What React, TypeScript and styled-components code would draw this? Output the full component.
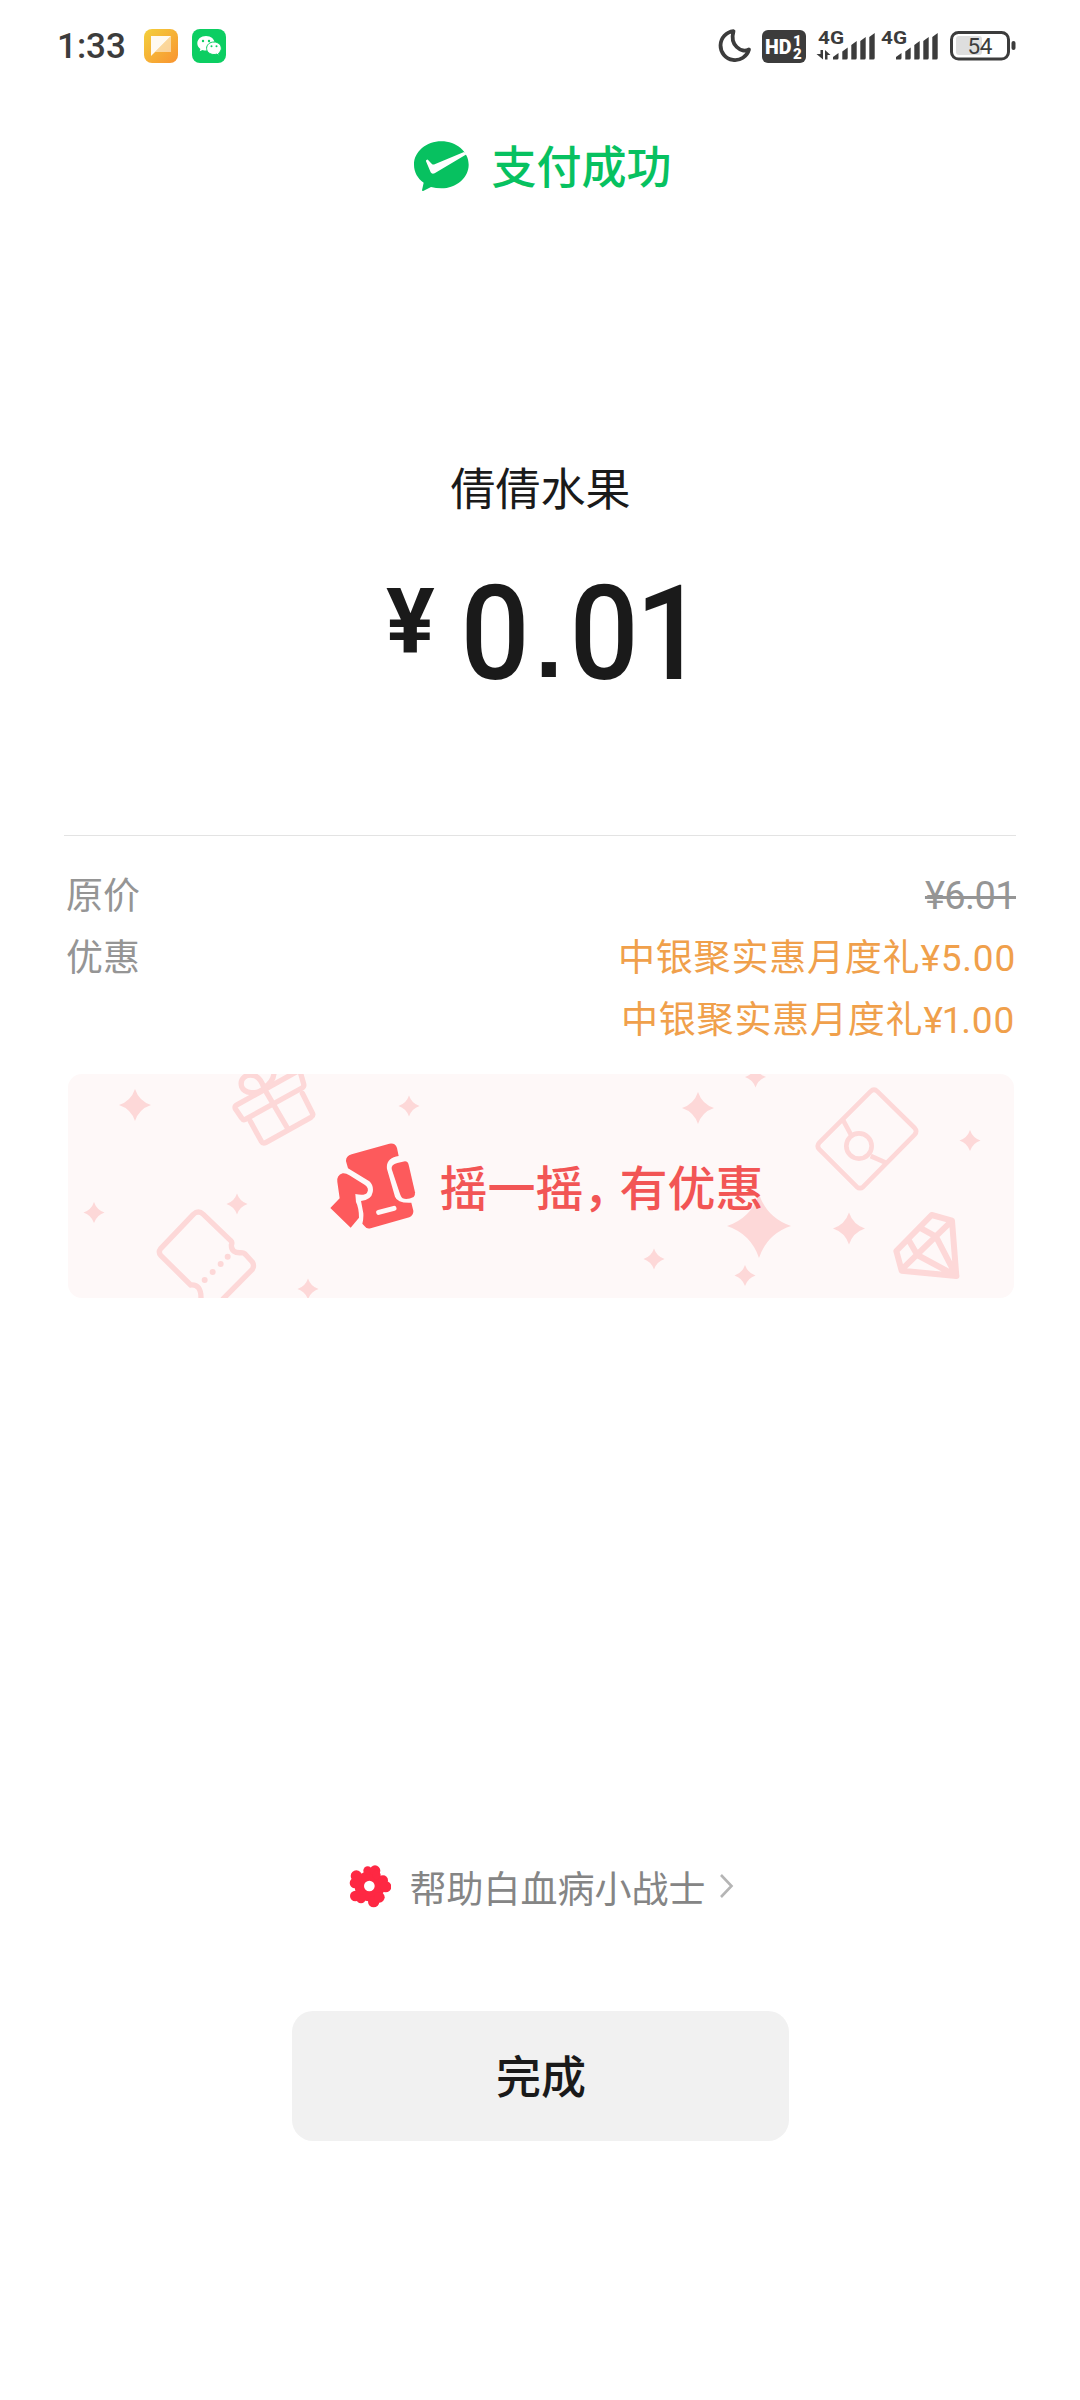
import React from "react";
import styled, { createGlobalStyle } from "styled-components";

const cjk = `Roboto, "Noto Sans CJK SC", sans-serif`;

const GlobalStyle = createGlobalStyle`
  * { box-sizing: border-box; }
  body { margin: 0; background: #fff; }
`;

const Page = styled.main`
  width: 1080px;
  height: 2400px;
  display: flex;
  flex-direction: column;
  align-items: center;
  overflow: hidden;
  background: #fff;
  color: #1a1a1a;
  font-family: ${cjk};
`;

const StatusBar = styled.header`
  width: 100%;
  height: 92px;
  padding: 0 64px 0 57px;
  display: flex;
  align-items: center;
  justify-content: space-between;
  color: #3c3c3c;
`;

const StatusGroup = styled.div<{ $gap: number }>`
  display: flex;
  align-items: center;
  gap: ${(p) => p.$gap}px;
  svg { display: block; overflow: visible; }
`;

const Clock = styled.span`
  width: 73px;
  font: 500 35px/40px Roboto, sans-serif;
  white-space: nowrap;
  padding-top: 1px;
`;

const Success = styled.div`
  height: 150px;
  padding: 49px 0 0 5px;
  display: flex;
  align-items: flex-start;
  gap: 22px;
  color: #07c160;
  svg { display: block; }
`;

const SuccessText = styled.h1`
  margin: 1px 0 0;
  font-size: 45px;
  font-weight: 500;
  line-height: 54px;
`;

const Merchant = styled.h2`
  margin: 219px 0 0;
  padding-left: 1px;
  font-size: 45px;
  font-weight: 400;
  line-height: 60px;
`;

const Amount = styled.div`
  width: 324px;
  height: 314px;
  margin-left: 16px;
  padding-top: 37px;
  display: flex;
  align-items: flex-start;
`;

const Currency = styled.span`
  flex: none;
  width: 71.5px;
  font: 700 91px/107px Roboto, sans-serif;
  margin-top: 11px;
`;

const Figure = styled.span`
  flex: none;
  display: flex;
  font: 500 131px/152px Roboto, sans-serif;
`;

const Digit = styled.span<{ $pull?: number }>`
  flex: none;
  width: 74px;
  margin-left: ${(p) => -(p.$pull ?? 0)}px;
  transform: scaleX(0.93);
`;

const Point = styled.span`
  flex: none;
  width: 35px;
  text-align: center;
  font: 700 100px/152px "Liberation Sans", sans-serif;
  padding-top: 8px;
`;

const Details = styled.section`
  width: 952px;
  border-top: 1px solid #e3e3e3;
  padding: 30px 0 22px 2px;
  display: flex;
  flex-direction: column;
`;

const DetailRow = styled.div`
  display: flex;
  justify-content: space-between;
  font-size: 37px;
  line-height: 62px;
  color: #959595;
`;

const Values = styled.div`
  display: flex;
  flex-direction: column;
  align-items: flex-end;
`;

const OldPrice = styled.s`
  text-decoration-thickness: 3px;
  font-size: 38px;
  letter-spacing: -0.6px;
  line-height: 60px;
`;

const Discount = styled.span<{ $inset?: number }>`
  color: #f0a04b;
  letter-spacing: 0.8px;
  padding-right: ${(p) => p.$inset ?? 0}px;
`;

const Narrow = styled.span`
  margin: 0 -2px 0 -2px;
`;

const Banner = styled.section`
  position: relative;
  width: 946px;
  height: 224px;
  margin-left: 2px;
  padding-left: 12px;
  border-radius: 14px;
  overflow: hidden;
  background: #fef8f8;
  display: flex;
  align-items: center;
  justify-content: center;
  gap: 23px;
`;

const Backdrop = styled.svg`
  position: absolute;
  inset: 0;
`;

const BannerIcon = styled.svg`
  position: relative;
  display: block;
`;

const BannerText = styled.strong`
  position: relative;
  padding-top: 8px;
  font-size: 48px;
  font-weight: 500;
  line-height: 60px;
  color: #f25555;
`;

const Comma = styled.span`
  letter-spacing: -12px;
`;

const Charity = styled.a`
  margin-top: 555px;
  height: 66px;
  padding-left: 2px;
  display: flex;
  align-items: center;
  color: #858585;
  font-size: 37px;
  line-height: 66px;
  svg { display: block; }
`;

const CharityText = styled.span`
  margin: 0 13px 0 19px;
  padding-top: 9px;
`;

const Done = styled.button`
  margin-top: 92px;
  margin-left: 1px;
  width: 497px;
  height: 130px;
  padding: 0 0 4px 1px;
  border: 0;
  border-radius: 21px;
  background: #f1f1f1;
  color: #1a1a1a;
  font-family: ${cjk};
  font-size: 45px;
  font-weight: 500;
`;

const NoteAppIcon = () => (
  <svg width="34" height="34" viewBox="0 0 34 34">
    <defs>
      <linearGradient id="note" x1="0" y1="0" x2="1" y2="1">
        <stop offset="0" stopColor="#f3d03c" />
        <stop offset="1" stopColor="#f99330" />
      </linearGradient>
    </defs>
    <rect width="34" height="34" rx="8" fill="url(#note)" />
    <path d="M7 7H27L7 27Z" fill="#fffaf0" />
    <path d="M27 7V23H11Z" fill="#fff" opacity=".5" />
  </svg>
);

const ChatAppIcon = () => (
  <svg width="34" height="34" viewBox="0 0 34 34">
    <rect width="34" height="34" rx="8" fill="#0cce62" />
    <path d="M14 7C9 7 5.300 10.200 5.300 14.300C5.300 16.600 6.500 18.500 8.400 19.900L7.700 22.300L10.500 20.900Q12.200 21.500 14 21.500C19 21.500 22.700 18.300 22.700 14.300C22.700 10.200 19 7 14 7Z" fill="#fff" />
    <path d="M22 13C17.800 13 14.600 15.700 14.600 19.300S17.800 25.500 22 25.500Q23.500 25.500 24.800 25.100L27.200 26.400L26.600 24.200C28.200 23 29.300 21.300 29.300 19.300C29.300 15.700 26.200 13 22 13Z" fill="#fff" stroke="#0cce62" strokeWidth="1" />
    <g fill="#0cce62">
      <circle cx="11" cy="12" r="1.200" /><circle cx="17" cy="12" r="1.200" />
      <circle cx="19.500" cy="17.300" r="1" /><circle cx="24.500" cy="17.300" r="1" />
    </g>
  </svg>
);

const MoonIcon = () => (
  <svg width="33" height="34" viewBox="0 0 33 34">
    <path d="M15.500 2.200A14.500 14.500 0 1 0 31 20.500C23 24.500 11.500 16 15.500 2.200Z" fill="none" stroke="#3c3c3c" strokeWidth="3.800" strokeLinejoin="round" />
  </svg>
);

const HdIcon = () => (
  <svg width="44" height="33" viewBox="0 0 44 33">
    <rect width="44" height="33" rx="6" fill="#3c3c3c" />
    <g fill="#fff" fontFamily="Roboto, sans-serif" fontWeight="900">
      <text x="3" y="23.500" fontSize="19.500" textLength="26.500" lengthAdjust="spacingAndGlyphs">HD</text>
      <text x="31" y="15.500" fontSize="15">1</text>
      <text x="31" y="29" fontSize="15">2</text>
    </g>
  </svg>
);

const SignalIcon = ({ data }: { data?: boolean }) => (
  <svg width="57" height="34" viewBox="0 0 57 34" fill="#3c3c3c">
    <text x="0" y="14.500" fontFamily="Roboto, sans-serif" fontWeight="700" fontSize="19" textLength="26" lengthAdjust="spacingAndGlyphs">4G</text>
    <path d="M15 30.500V28L20.500 24V29Q20.500 30.500 19 30.500ZM24.300 30.500V22.500L29.700 18.500V29Q29.700 30.500 28.200 30.500ZM33.300 30.500V16L38.700 12V29Q38.700 30.500 37.200 30.500ZM42.300 30.500V12L47.700 8V29Q47.700 30.500 46.200 30.500ZM51.300 30.500V8L56.700 4V29Q56.700 30.500 55.200 30.500Z" />
    {data && <path d="M-1.500 25H2.500V21H5V30.500ZM7 21L12.500 26H9.500V30.500H7Z" />}
  </svg>
);

const BatteryIcon = () => (
  <svg width="66" height="30" viewBox="0 0 66 30">
    <rect x="6" y="5" width="26" height="19" rx="3" fill="#dedede" />
    <rect x="1.500" y="1.500" width="57" height="26.500" rx="7" fill="none" stroke="#3c3c3c" strokeWidth="3" />
    <rect x="61.500" y="10" width="4" height="9" rx="2" fill="#3c3c3c" />
    <text x="17.500" y="23" fontFamily="Roboto, sans-serif" fontWeight="400" fontSize="22.500" textLength="25" fill="#3c3c3c">54</text>
  </svg>
);

const StatusItem = styled.span<{ $before?: number }>`
  margin-left: ${(p) => p.$before ?? 0}px;
`;

const PaidIcon = () => (
  <svg width="56" height="51" viewBox="72 61 168 153">
    <path d="M157 62C112 62 75 93 75 132C75 154 86 173 104 186L99 209Q100 213 104 210L126 199Q141 203 157 203C202 203 239 171 239 132C239 93 202 62 157 62Z" fill="#07c160" />
    <path d="M114 117Q110 118 111 122L125 155Q129 162 137 158L234 100L225 94L137 131Q132 133 128 129L118 119Q116 116 114 117Z" fill="#fff" />
  </svg>
);

const ShakeIcon = () => (
  <BannerIcon width="86" height="86" viewBox="30 67 258 258">
    <g fill="#fd5a5c">
      <path d="M95 101L208 69Q226 66 231 82L236 106C212 110 198 122 201 145L225 228Q232 248 274 246L280 270Q281 284 268 290L152 323Q140 326 134 317L127 309Q131 295 130 278L123 241Q154 238 158 215Q162 195 148 182L84 143L78 122Q77 107 95 101Z" />
      <path d="M52 184Q49 164 68 158Q78 157 88 164L135 193Q149 204 141 216Q134 226 106 220L108 244Q117 262 117 291L92 321L31 262L59 233Z" />
      <path d="M232 127L255 122Q263 122 266 132L285 215Q286 224 281 229Q262 238 248 233Q243 229 240 220L215 145Q213 132 232 127Z" />
    </g>
    <path d="M176 275L222 263" stroke="#fff8f8" strokeWidth="15" strokeLinecap="round" />
  </BannerIcon>
);

const stars: [number, number, number][] = [
  [135, 1105, 16], [94, 1212.5, 10.5], [237, 1204, 10.5], [308, 1289, 10.5], [409, 1106, 10.5],
  [698, 1108, 16], [755.5, 1077, 10.5], [970, 1140.5, 10.5], [759, 1226, 32], [849, 1228.5, 16],
  [654, 1259, 10.5], [745, 1275.5, 10.5],
];

const starPath = (x: number, y: number, r: number) => {
  const k = r * 0.25;
  return `M${x} ${y - r}Q${x + k} ${y - k} ${x + r} ${y}Q${x + k} ${y + k} ${x} ${y + r}Q${x - k} ${y + k} ${x - r} ${y}Q${x - k} ${y - k} ${x} ${y - r}Z`;
};

const BannerArt = () => (
  <Backdrop width="946" height="224" viewBox="68 1074 946 224">
    {stars.map(([x, y, r]) => (
      <path key={`${x}-${y}`} d={starPath(x, y, r)} fill="#fdd8d8" />
    ))}
    <g transform="translate(60 1060) scale(.33333)" fill="none" stroke="#fdd8d8" strokeWidth="16" strokeLinejoin="round" strokeLinecap="round">
      <path d="M532 134L712 34Q718 32 722 40L731 72Q733 80 726 84L556 178Q549 181 545 174L526 146Q523 139 532 134Z" />
      <path d="M571 184L604 244Q609 252 617 248L753 172Q761 167 757 159L727 100M614 88L682 204" />
      <path d="M612 84C590 108 552 98 545 80C538 54 560 40 584 47C600 53 606 66 612 84ZM612 84Q640 65 642 40" />
      <path d="M392 675L302 586Q294 576 302 566L400 463Q415 449 430 463L512 542Q518 547 514 555Q514 580 543 578Q552 578 558 585L577 606Q584 617 577 628L490 716M392 675Q424 672 423 716" />
      <path d="M503 590L503 590.100M482 612V612.100M458 636V636.100M434 660V660.100" strokeWidth="18" />
    </g>
    <g transform="translate(630 1060) scale(.33333)" fill="none" stroke="#fdd8d8" strokeWidth="14" strokeLinejoin="round">
      <path d="M722 94Q732 84 742 94L854 204Q863 214 854 224L700 380Q690 389 680 380L568 268Q558 258 568 248Z" />
      <circle cx="687" cy="258" r="38" />
      <path d="M638 178L664 226M722 288L772 310" />
      <path d="M905 465L966 482L979 648L815 632L799 573ZM818 626L966 482M868 502L918 530L979 648L862 585L836 540" strokeWidth="18" />
    </g>
  </Backdrop>
);

const FlowerIcon = () => (
  <svg width="42" height="43" viewBox="56 76 126 129">
    <g fill="#fe2843">
      <circle cx="118" cy="140" r="45" />
      <circle cx="112" cy="93" r="13" /><circle cx="134" cy="93" r="16" /><circle cx="138" cy="106" r="13" />
      <circle cx="158" cy="122" r="15" /><circle cx="166" cy="141" r="17" />
      <circle cx="130" cy="186" r="17" /><circle cx="147" cy="173" r="16" />
      <circle cx="92" cy="177" r="14" /><circle cx="75" cy="169" r="16" />
      <circle cx="78" cy="109" r="17" /><circle cx="74" cy="130" r="16" />
    </g>
    <circle cx="117" cy="139" r="16" fill="#fff" />
  </svg>
);

const ChevronIcon = () => (
  <svg width="15" height="26" viewBox="0 0 15 26">
    <path d="M2 2L12.500 13L2 24" fill="none" stroke="#b5b5b5" strokeWidth="2.600" />
  </svg>
);

export default function App() {
  return (
    <Page>
      <GlobalStyle />
      <StatusBar>
        <StatusGroup $gap={14}>
          <Clock>1:33</Clock>
          <NoteAppIcon />
          <ChatAppIcon />
        </StatusGroup>
        <StatusGroup $gap={0}>
          <StatusItem><MoonIcon /></StatusItem>
          <StatusItem $before={11}><HdIcon /></StatusItem>
          <StatusItem $before={12}><SignalIcon data /></StatusItem>
          <StatusItem $before={6}><SignalIcon /></StatusItem>
          <StatusItem $before={12.5}><BatteryIcon /></StatusItem>
        </StatusGroup>
      </StatusBar>
      <Success>
        <PaidIcon />
        <SuccessText>支付成功</SuccessText>
      </Success>
      <Merchant>倩倩水果</Merchant>
      <Amount>
        <Currency>¥</Currency>
        <Figure>
          <Digit>0</Digit>
          <Point>.</Point>
          <Digit>0</Digit>
          <Digit $pull={8}>1</Digit>
        </Figure>
      </Amount>
      <Details>
        <DetailRow>
          <span>原价</span>
          <OldPrice>¥6.01</OldPrice>
        </DetailRow>
        <DetailRow>
          <span>优惠</span>
          <Values>
            <Discount>中银聚实惠月度礼¥5.00</Discount>
            <Discount $inset={1}>中银聚实惠月度礼¥<Narrow>1</Narrow>.00</Discount>
          </Values>
        </DetailRow>
      </Details>
      <Banner>
        <BannerArt />
        <ShakeIcon />
        <BannerText>摇一摇<Comma>，</Comma>有优惠</BannerText>
      </Banner>
      <Charity>
        <FlowerIcon />
        <CharityText>帮助白血病小战士</CharityText>
        <ChevronIcon />
      </Charity>
      <Done>完成</Done>
    </Page>
  );
}
